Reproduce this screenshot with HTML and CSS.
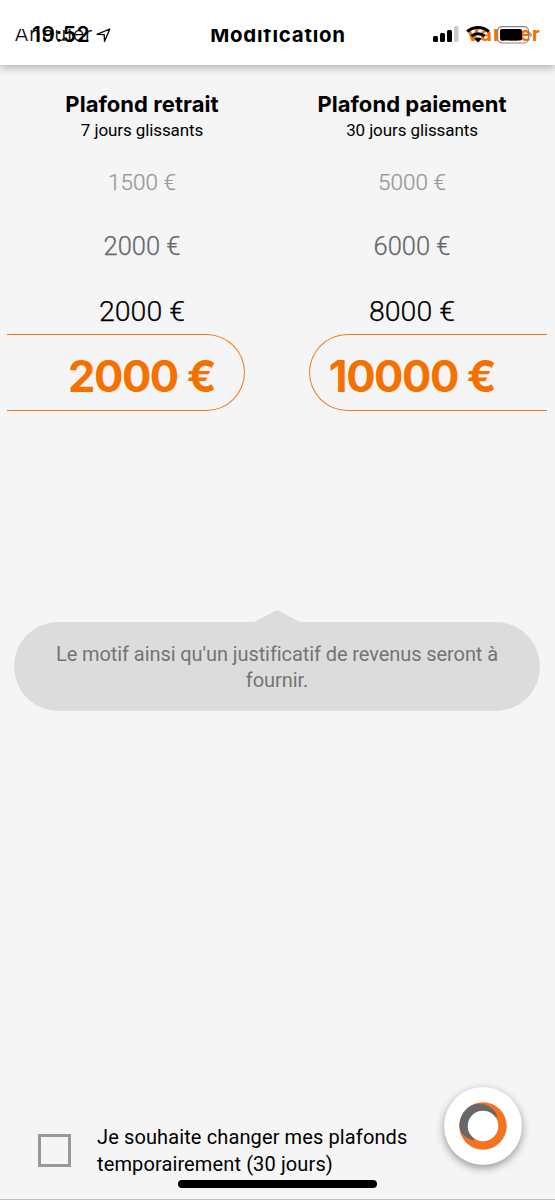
FILE: index.html
```html
<!DOCTYPE html>
<html lang="fr">
<head>
<meta charset="utf-8">
<title>Modification</title>
<link rel="stylesheet" href="styles.css">
</head>
<body>
<div class="screen">
  <header class="navbar">
    <div class="nav-items">
      <span class="nav-cancel">Annuler</span>
      <span class="nav-title">Modification</span>
      <span class="nav-confirm">Valider</span>
    </div>
    <div class="statusbar">
      <span class="clock">19:52</span>
      <svg class="location" width="16" height="16" viewBox="0 0 16 16"><path d="M1 7.3 13.8 2 8.5 14.4 8.2 7.6Z" fill="none" stroke="#000" stroke-width="1.3" stroke-linejoin="round"/></svg>
      <svg class="signal" width="26" height="17" viewBox="0 0 26 17"><rect x="0" y="10" width="5" height="6" rx="1.5"/><rect x="7" y="7" width="5" height="9" rx="1.5"/><rect x="14" y="4" width="5" height="12" rx="1.5"/><rect x="21" y="0" width="4.5" height="16" rx="1.5" fill="#cbcbcb"/></svg>
      <svg class="wifi" width="24" height="17" viewBox="0 0 24 17"><g fill="none" stroke="#000" stroke-width="3"><path d="M1.2 5.6C7.2.1 16.8.1 22.8 5.6"/><path d="M5.5 10.2C9.1 6.8 14.9 6.8 18.5 10.2"/></g><path d="M8.3 12.8C10.4 11 13.6 11 15.7 12.8L12 16.6Z"/></svg>
      <svg class="battery" width="36" height="18" viewBox="0 0 36 18"><rect x=".6" y=".6" width="31" height="16.4" rx="4.5" fill="none" stroke="#858585" stroke-width="1.2"/><rect x="3" y="3" width="22" height="11.5" rx="2"/><path d="M33.5 6Q36 9 33.5 12Z" fill="#858585"/></svg>
    </div>
  </header>
  <main class="content">
    <section class="limits">
      <div class="limit limit-left">
        <h2>Plafond retrait</h2>
        <p class="period">7 jours glissants</p>
        <div class="value far">1500 €</div>
        <div class="value mid">2000 €</div>
        <div class="value near">2000 €</div>
        <div class="selected"><span>2000 €</span></div>
      </div>
      <div class="limit limit-right">
        <h2>Plafond paiement</h2>
        <p class="period">30 jours glissants</p>
        <div class="value far">5000 €</div>
        <div class="value mid">6000 €</div>
        <div class="value near">8000 €</div>
        <div class="selected"><span>10000 €</span></div>
      </div>
    </section>
    <section class="notice">
      <svg class="notice-arrow" width="50" height="13" viewBox="0 0 50 13"><path d="M0 13 25 0 50 13Z"/></svg>
      <p>Le motif ainsi qu'un justificatif de revenus seront à<br>fournir.</p>
    </section>
  </main>
  <footer class="footer">
    <span class="checkbox"></span>
    <p>Je souhaite changer mes plafonds<br>temporairement (30 jours)</p>
  </footer>
  <div class="bubble">
    <svg width="50" height="50" viewBox="0 0 50 50"><circle cx="25" cy="25" r="23.7" fill="#f47320"/><path d="M1.5 26C1.2 12 11 2.7 21 2.7 29 2.7 36 7 39.5 15L25 25 15.5 39.5C8 37 2 33 1.5 26Z" fill="#686868"/><circle cx="25" cy="25" r="15.3" fill="#fff"/></svg>
  </div>
  <div class="home-bar"></div>
</div>
</body>
</html>
```
FILE: styles.css
```css
* { box-sizing: border-box; }
body { margin: 0; background: #f5f5f5; color: #000; font-family: Roboto, sans-serif; }
h2, p { margin: 0; }
.screen { position: relative; width: 555px; height: 1200px; overflow: hidden; display: flex; flex-direction: column; border-bottom: 1px solid #bdbdbd; }
.navbar { position: relative; height: 65px; flex: none; background: #fff; box-shadow: 0 2px 9px rgba(0,0,0,.32); }
.nav-items { display: grid; grid-template-columns: 1fr auto 1fr; padding: 20px 14px 0 15px; line-height: 29px; clip-path: inset(29px 0 0 0); white-space: nowrap; }
.nav-cancel { font-size: 21px; font-weight: 300; letter-spacing: 1.1px; -webkit-text-stroke: .2px; }
.nav-title { font-family: Inter, sans-serif; font-size: 20.5px; font-weight: 700; letter-spacing: .75px; }
.nav-confirm { justify-self: end; color: #f47100; font-size: 21px; font-weight: 700; letter-spacing: 1.2px; }
.statusbar { position: absolute; top: 26px; left: 32px; right: 22px; height: 17px; display: flex; align-items: center; }
.clock { width: 64px; font: 600 21px/17px Inter, sans-serif; letter-spacing: .6px; }
.signal { margin-left: auto; }
.wifi { margin-left: 7px; }
.battery { margin-left: 7px; }
.content { flex: 1; }
.limits { display: grid; grid-template-columns: 1fr 1fr; padding: 24px 8px 0 7px; text-align: center; white-space: nowrap; }
.limit { display: flex; flex-direction: column; }
h2 { font: 700 22px/30px Inter, sans-serif; letter-spacing: .05px; }
.period { font-size: 17px; line-height: 22px; letter-spacing: -.1px; }
.value { display: flex; align-items: center; justify-content: center; font-weight: 300; -webkit-text-stroke: .25px; }
.far { height: 72px; padding-top: 9px; font-size: 22.5px; color: #999; }
.mid { height: 65px; font-size: 25.5px; color: #666; }
.near { height: 56px; padding-top: 11px; font-size: 28.5px; }
.selected { height: 77px; width: 238px; border: 1.5px solid #f47a1c; color: #f47100; font: 700 43.5px/82px Inter, sans-serif; letter-spacing: -1.4px; }
.limit-left .selected { border-left: 0; border-radius: 0 39px 39px 0; padding-left: 32px; }
.limit-right .selected { align-self: flex-end; border-right: 0; border-radius: 39px 0 0 39px; padding-right: 33px; }
.notice { margin: 199px 15px 0 14px; text-align: center; color: #747474; font-size: 20px; line-height: 26.5px; letter-spacing: -.08px; }
.notice-arrow { display: block; margin: 0 auto -1px; fill: #dcdcdc; }
.notice p { height: 89px; padding-top: 18.5px; background: #dcdcdc; border-radius: 45px; white-space: nowrap; }
.footer { display: flex; gap: 26px; padding: 0 38px 22px; align-items: center; font-size: 20px; line-height: 26.5px; letter-spacing: .12px; white-space: nowrap; }
.checkbox { width: 33px; height: 33px; border: 3px solid #989898; }
.bubble { position: absolute; left: 444px; top: 1087px; width: 78px; height: 78px; border-radius: 50%; background: #fff; box-shadow: 0 3px 8px rgba(0,0,0,.4); display: grid; place-items: center; }
.home-bar { position: absolute; left: 178px; top: 1180px; width: 199px; height: 8px; border-radius: 4px; background: #000; }
```
